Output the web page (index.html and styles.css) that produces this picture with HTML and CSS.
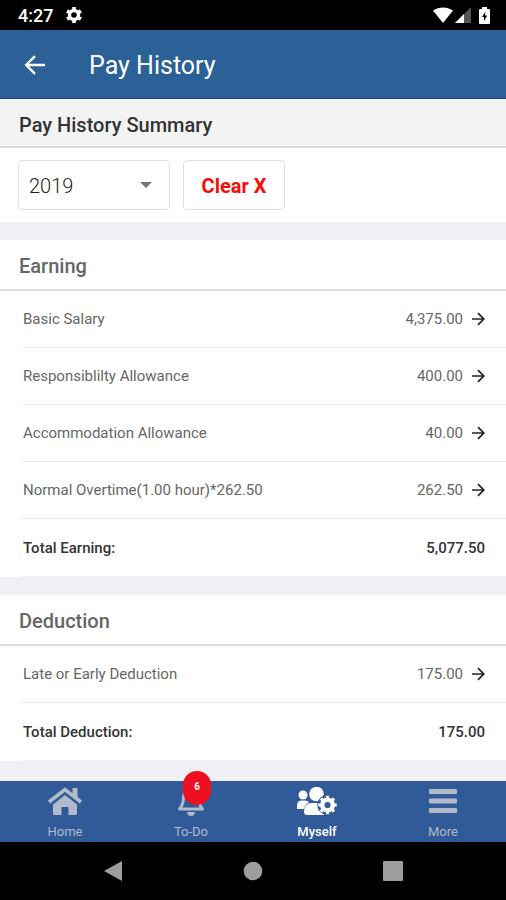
FILE: index.html
```html
<!DOCTYPE html>
<html lang="en">
<head>
    <meta charset="UTF-8">
    <meta name="viewport" content="width=device-width, initial-scale=1.0">
    <title>Pay History</title>
    <link rel="stylesheet" href="styles.css">
</head>
<body>
    <svg class="sprite" aria-hidden="true">
        <symbol id="arrow" viewBox="0 0 14 14">
            <path d="M1 7H12.5M7 1.2L12.8 7L7 12.8" fill="none" stroke="currentColor" stroke-width="1.7"/>
        </symbol>
    </svg>

    <div class="status">
        <span class="time">4:27</span>
        <svg class="status-gear" width="18" height="18" viewBox="0 0 18 18" fill="none" stroke="#fff">
            <circle cx="9" cy="9" r="4.5" stroke-width="3.4"/>
            <circle cx="9" cy="9" r="6.8" stroke-width="2.6" pathLength="6" stroke-dasharray=".5 .5" stroke-dashoffset="-.25"/>
        </svg>
        <div class="status-icons">
            <svg width="20" height="16" viewBox="0 0 20 16"><path d="M0 3.5C6 -.5 14 -.5 20 3.5L10 16z" fill="#fff"/></svg>
            <svg width="16" height="16" viewBox="0 0 16 16"><path d="M0 16L16 0V16z" fill="#555"/><path d="M0 16L9 7V16z" fill="#fff"/></svg>
            <svg class="battery" width="11" height="17" viewBox="0 0 11 17"><path d="M0 2.5Q0 2 1 2H3V0H8V2H10Q11 2 11 3V16Q11 17 10 17H1Q0 17 0 16z" fill="#fff"/><path d="M6.5 4.5L3 10H5V14L8.2 8.500H6z" fill="#000"/></svg>
        </div>
    </div>

    <header class="header">
        <button class="back" type="button" aria-label="Back">
            <svg width="22" height="20" viewBox="0 0 22 20"><path d="M21 10H2.5M11 1.2L2.200 10L11 18.800" fill="none" stroke="#fff" stroke-width="2.4"/></svg>
        </button>
        <h1>Pay History</h1>
    </header>

    <main class="content">
        <section>
            <h2 class="title title-main">Pay History Summary</h2>
            <form class="filter">
                <div class="year">
                    <select aria-label="Year">
                        <option>2019</option>
                    </select>
                    <svg class="caret" width="12" height="6" viewBox="0 0 12 6"><path d="M0 0H12L6 6z" fill="#757575"/></svg>
                </div>
                <button class="clear" type="reset">Clear X</button>
            </form>
        </section>

        <section class="card">
            <h2 class="title">Earning</h2>
            <table class="pay">
                <tr>
                    <th scope="row">Basic Salary</th>
                    <td><a href="#">4,375.00 <svg width="14" height="14"><use href="#arrow"/></svg></a></td>
                </tr>
                <tr>
                    <th scope="row">Responsiblilty Allowance</th>
                    <td><a href="#">400.00 <svg width="14" height="14"><use href="#arrow"/></svg></a></td>
                </tr>
                <tr>
                    <th scope="row">Accommodation Allowance</th>
                    <td><a href="#">40.00 <svg width="14" height="14"><use href="#arrow"/></svg></a></td>
                </tr>
                <tr>
                    <th scope="row">Normal Overtime(1.00 hour)*262.50</th>
                    <td><a href="#">262.50 <svg width="14" height="14"><use href="#arrow"/></svg></a></td>
                </tr>
                <tr class="total">
                    <th scope="row">Total Earning:</th>
                    <td>5,077.50</td>
                </tr>
            </table>
        </section>

        <section class="card">
            <h2 class="title">Deduction</h2>
            <table class="pay">
                <tr>
                    <th scope="row">Late or Early Deduction</th>
                    <td><a href="#">175.00 <svg width="14" height="14"><use href="#arrow"/></svg></a></td>
                </tr>
                <tr class="total">
                    <th scope="row">Total Deduction:</th>
                    <td>175.00</td>
                </tr>
            </table>
        </section>
    </main>

    <nav class="tabs">
        <a class="tab" href="#">
            <svg width="36" height="30" viewBox="0 0 36 30">
                <path d="M2 16L18 3.5L34 16" fill="none" stroke="currentColor" stroke-width="3.6"/>
                <path d="M25.5 2H30.5V12L25.5 8z" fill="currentColor"/>
                <path d="M18 9L30 18.5V27.5Q30 29 28.5 29H21.5V21H14.5V29H7.5Q6 29 6 27.5V18.5z" fill="currentColor"/>
            </svg>
            <span>Home</span>
        </a>
        <a class="tab" href="#">
            <svg width="28" height="30" viewBox="0 0 28 30">
                <path d="M14 2C8.5 3 6.5 7 6.5 12C6.5 17 5 20 2.5 23H25.5C23 20 21.5 17 21.5 12C21.5 7 19.5 3 14 2z" fill="none" stroke="currentColor" stroke-width="3" stroke-linejoin="round"/>
                <path d="M10 26H18Q17.5 30 14 30Q10.5 30 10 26z" fill="currentColor"/>
            </svg>
            <span>To-Do</span>
            <b class="badge">6</b>
        </a>
        <a class="tab active" href="#">
            <svg width="40" height="30" viewBox="0 0 40 30">
                <circle cx="6" cy="9" r="4.5" fill="currentColor"/>
                <path d="M0 23V19.5Q0 14.5 5 14.5H8Q11 14.5 12 16.5Q8 18 7 23z" fill="currentColor"/>
                <circle cx="19.5" cy="8" r="7.3" fill="currentColor"/>
                <path d="M7 26Q7 17 15 17H27V29H10Q7 29 7 26z" fill="currentColor"/>
                <circle cx="30.5" cy="19" r="10.3" fill="#315a98"/>
                <path d="M15 25.5H23L27 29H15z" fill="currentColor"/>
                <g fill="none" stroke="currentColor">
                    <circle cx="30.5" cy="19" r="5.3" stroke-width="4.4"/>
                    <circle cx="30.5" cy="19" r="7.9" stroke-width="2.8" pathLength="8" stroke-dasharray=".5 .5" stroke-dashoffset=".25"/>
                </g>
            </svg>
            <span>Myself</span>
        </a>
        <a class="tab" href="#">
            <svg width="28" height="30" viewBox="0 0 28 30" fill="currentColor">
                <rect y="3" width="28" height="5" rx="1"/>
                <rect y="12.5" width="28" height="5" rx="1"/>
                <rect y="22" width="28" height="5" rx="1"/>
            </svg>
            <span>More</span>
        </a>
    </nav>

    <div class="system">
        <button type="button" aria-label="Back"><svg width="20" height="20" viewBox="0 0 20 20"><path d="M1 10L19 0V20z" fill="#9d9d9d"/></svg></button>
        <button type="button" aria-label="Home"><svg width="20" height="20" viewBox="0 0 20 20"><circle cx="10" cy="10" r="9.3" fill="#9d9d9d"/></svg></button>
        <button type="button" aria-label="Recent apps"><svg width="20" height="20" viewBox="0 0 20 20"><rect width="20" height="20" rx="1" fill="#9d9d9d"/></svg></button>
    </div>
</body>
</html>
```

FILE: styles.css
```css
*{
    box-sizing: border-box;
    margin: 0;
    padding: 0;
}
body{
    min-height: 100vh;
    display: flex;
    flex-direction: column;
    background-color: #efeff4;
    color: #333;
    font-family: Roboto, "Liberation Sans", sans-serif;
    font-size: 15px;
}
button{
    border: 0;
    background: none;
    font-family: inherit;
}
a{
    color: inherit;
    text-decoration: none;
}
svg{
    display: block;
    flex-shrink: 0;
}
.sprite{
    position: absolute;
    width: 0;
    height: 0;
}

/* status bar */
.status{
    height: 30px;
    display: flex;
    align-items: center;
    padding: 0 16px 0 18px;
    background-color: #000;
    color: #fff;
}
.time{
    font-size: 18px;
    font-weight: 500;
}
.status-gear{
    margin-left: 12px;
}
.status-icons{
    display: flex;
    gap: 2px;
    margin-left: auto;
}
.battery{
    margin-left: 6px;
}

/* header */
.header{
    height: 69px;
    display: flex;
    align-items: center;
    padding: 2px 24px 0;
    border-bottom: 1px solid #17467f;
    background-color: #2c6197;
    color: #fff;
}
.header h1{
    margin-left: 43px;
    font-size: 25px;
    font-weight: 400;
}

.content{
    flex: 1;
    display: flex;
    flex-direction: column;
    gap: 18px;
}
.title{
    height: 51px;
    padding: 1px 19px 0;
    border-bottom: 2px solid #dcdcde;
    background-color: #fff;
    color: #666;
    font-size: 20px;
    font-weight: 500;
    line-height: 51px;
}
.title-main{
    height: 49px;
    background-color: #f3f3f3;
    color: #333;
}
.filter{
    display: flex;
    gap: 13px;
    padding: 12px 18px;
    background-color: #fff;
}
.year{
    position: relative;
    width: 152px;
}
.year select,
.clear{
    width: 100%;
    height: 50px;
    padding-top: 2px;
    border: 1px solid #dce0e5;
    border-radius: 4px;
    background-color: #fff;
    font-size: 20px;
}
.year select{
    appearance: none;
    padding-left: 10px;
    color: #222;
    font-family: inherit;
    font-weight: 300;
}
.caret{
    position: absolute;
    top: 22px;
    right: 18px;
    pointer-events: none;
}
.clear{
    width: 102px;
    color: #f90b0b;
    font-weight: 700;
}

/* pay tables */
.card{
    background-color: #fff;
}
.pay{
    width: 100%;
    padding-left: 22px;
    border-spacing: 0;
}
.pay th,
.pay td{
    height: 57px;
    border-bottom: 1px solid #ebebed;
    color: #666;
    font-weight: 400;
}
.pay th{
    padding-left: 1px;
    text-align: left;
}
.pay td{
    padding-right: 21px;
    text-align: right;
}
.pay td a{
    display: flex;
    justify-content: flex-end;
    align-items: center;
    gap: 8px;
}
.pay td svg{
    color: #222;
}
.pay .total th,
.pay .total td{
    height: 58px;
    color: #333;
    font-weight: 500;
}

/* bottom tabs */
.tabs{
    height: 61px;
    display: flex;
    padding-left: 2px;
    background-color: #315a98;
}
.tab{
    position: relative;
    flex: 1;
    display: flex;
    flex-direction: column;
    align-items: center;
    padding-top: 5px;
    color: #b0bac9;
    font-size: 13px;
    line-height: 16px;
}
.tab span{
    margin-top: 8px;
}
.tab.active{
    color: #fff;
    font-weight: 500;
}
.badge{
    position: absolute;
    top: -10px;
    left: 50%;
    width: 28px;
    height: 34px;
    margin-left: -8px;
    border-radius: 14px;
    background-color: #ee1020;
    color: #fff;
    font-size: 10px;
    line-height: 31px;
    text-align: center;
}

/* android buttons */
.system{
    height: 58px;
    display: flex;
    justify-content: center;
    align-items: center;
    gap: 120px;
    background-color: #000;
}
```
